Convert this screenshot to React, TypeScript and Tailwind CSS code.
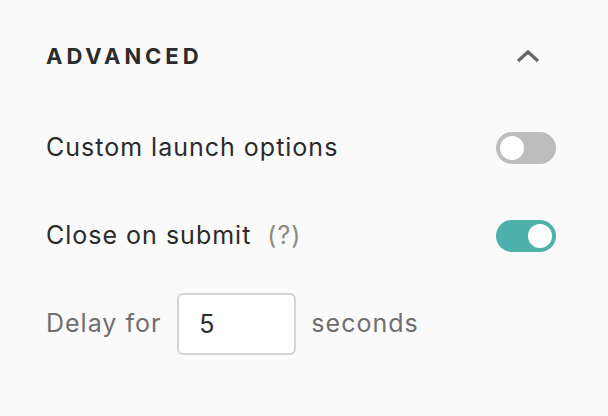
import React, { useState } from "react";

function Toggle({ on, onChange }: { on: boolean; onChange: () => void }) {
  return (
    <button
      onClick={onChange}
      className={`flex h-[32px] w-[60px] items-center rounded-full p-[4px] ${on ? "justify-end bg-[#4db0aa]" : "justify-start bg-[#bdbdbd]"}`}
    >
      <span className="block h-[24px] w-[24px] rounded-full bg-white" />
    </button>
  );
}

export default function App() {
  const [custom, setCustom] = useState(false);
  const [close, setClose] = useState(true);
  const [delay, setDelay] = useState("5");

  return (
    <div className="h-[416px] w-[608px] bg-[#fafafa] pl-[46px] pr-[52px] pt-[40px] font-['Inter',sans-serif] text-[#2b2b2b]">
      {/* header */}
      <div className="flex h-[32px] items-center justify-between">
        <h2 className="text-[22px] font-bold tracking-[0.18em]">ADVANCED</h2>
        <svg width="24" height="14" viewBox="0 0 24 14" className="mr-[16px]">
          <path d="M2 12 L12 3 L22 12" fill="none" stroke="#666" strokeWidth="3.2" strokeLinejoin="miter" />
        </svg>
      </div>

      <div className="mt-[60px] flex h-[32px] items-center justify-between">
        <span className="text-[25px] tracking-[0.04em]">Custom launch options</span>
        <Toggle on={custom} onChange={() => setCustom(!custom)} />
      </div>

      <div className="mt-[56px] flex h-[32px] items-center justify-between">
        <span className="text-[25px] tracking-[0.04em]">
          Close on submit<span className="ml-[16px] text-[#8a8a8a]">(?)</span>
        </span>
        <Toggle on={close} onChange={() => setClose(!close)} />
      </div>

      <div className="mt-[41px] flex items-center text-[25px] tracking-[0.04em] text-[#6f6f6f]">
        <span>Delay for</span>
        <input
          value={delay}
          onChange={(e) => setDelay(e.target.value)}
          className="ml-[16px] mr-[15px] h-[62px] w-[119px] rounded-[6px] border-2 border-[#d4d4d4] bg-white px-[20px] text-[25px] text-[#2b2b2b] outline-none"
        />
        <span>seconds</span>
      </div>
    </div>
  );
}
